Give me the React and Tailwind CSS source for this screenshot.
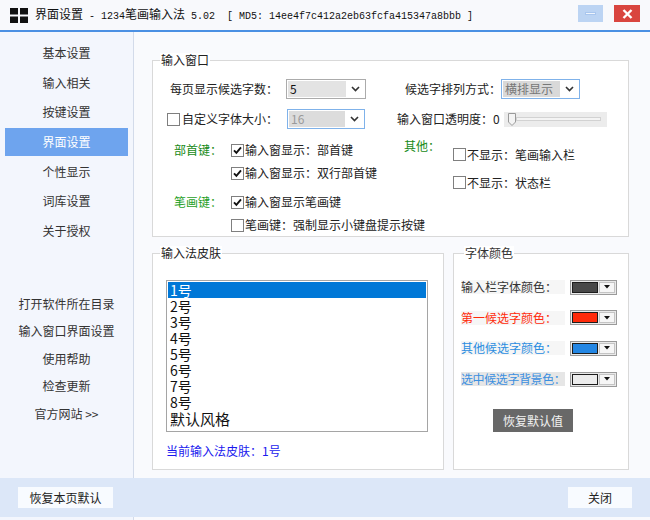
import React from "react";

const Check = ({ checked }) => (
  <span className="w-[13px] h-[13px] border border-[#7f7f7f] bg-white flex items-center justify-center shrink-0">
    {checked && (
      <svg width="9" height="9" viewBox="0 0 9 9">
        <path d="M1 4.3 L3.4 6.8 L8 1.4" stroke="#111" strokeWidth="1.9" fill="none" />
      </svg>
    )}
  </span>
);

const Chev = () => (
  <svg width="9" height="6" viewBox="0 0 9 6" className="shrink-0">
    <path d="M1 1 L4.5 4.6 L8 1" stroke="#333" strokeWidth="1.6" fill="none" />
  </svg>
);

const CheckItem = ({ checked, children, h }) => (
  <div className={`flex items-center ${h}`}>
    <Check checked={checked} />
    <span className="ml-[1px] text-[#222] whitespace-nowrap">{children}</span>
  </div>
);

const ColorBtn = ({ color }) => (
  <div className="w-[47px] h-[15px] border border-[#9a9a9a] bg-[#e9e9e9] flex items-center p-[1px] gap-[1px] shrink-0">
    <div className="w-[26px] h-[11px] border border-[#1c1c1c]" style={{ background: color }} />
    <div className="flex-1 h-[11px] bg-[#f6f6f6] border border-[#c4c4c4] flex items-center justify-center">
      <svg width="6" height="4" viewBox="0 0 6 4">
        <path d="M0 0 H6 L3 3.5 Z" fill="#111" />
      </svg>
    </div>
  </div>
);

export default function App() {
  const top = ["基本设置", "输入相关", "按键设置", "界面设置", "个性显示", "词库设置", "关于授权"];
  const bottom = ["打开软件所在目录", "输入窗口界面设置", "使用帮助", "检查更新", "官方网站 >>"];
  const skins = ["1号", "2号", "3号", "4号", "5号", "6号", "7号", "8号", "默认风格"];
  return (
    <div className="w-[650px] h-[520px] flex flex-col bg-[#f9fafd] font-['Noto_Sans_CJK_SC',sans-serif] text-[12px] leading-[14px] text-[#222] overflow-hidden">
      {/* Title bar */}
      <div className="h-[32px] shrink-0 border-b-2 border-[#4b90e3] bg-[#f8f9fc] flex items-start">
        <div className="flex items-center h-[30px] pl-[10px]">
          <svg width="18" height="15" viewBox="0 0 18 15" className="shrink-0">
            <rect x="0" y="0" width="8" height="6.5" fill="#111" />
            <rect x="10" y="0" width="8" height="6.5" fill="#111" />
            <rect x="0" y="8.5" width="8" height="6.5" fill="#111" />
            <rect x="10" y="8.5" width="8" height="6.5" fill="#111" />
          </svg>
          <span className="ml-[7px] whitespace-pre font-['Liberation_Mono','Noto_Sans_CJK_SC',monospace] text-[10px] text-[#111]">
            <span className="text-[12px] font-['Noto_Sans_CJK_SC',sans-serif]">界面设置</span>
            {" - 1234"}
            <span className="text-[12px] font-['Noto_Sans_CJK_SC',sans-serif]">笔画输入法</span>
            {" 5.02  [ MD5: 14ee4f7c412a2eb63fcfa415347a8bbb ]"}
          </span>
        </div>
        <div className="ml-auto flex items-start pt-[5px] pr-[10px] gap-[11px]">
          <div className="w-[25px] h-[17px] bg-[#bcd4f3] flex items-center justify-center">
            <div className="w-[11px] h-[3px] bg-[#eef4fc] border border-[#a9c6ee]" />
          </div>
          <div className="w-[26px] h-[17px] bg-[#d9453f] flex items-center justify-center">
            <svg width="11" height="10" viewBox="0 0 11 10">
              <path d="M1.5 1 L9.5 9 M9.5 1 L1.5 9" stroke="#fff" strokeWidth="2.4" />
            </svg>
          </div>
        </div>
      </div>

      {/* Body */}
      <div className="flex flex-1 min-h-0">
        {/* Sidebar */}
        <div className="w-[134px] shrink-0 border-r border-[#d3dbea] bg-[#f3f6fd] flex flex-col pt-[7px]">
          <div className="flex flex-col gap-[1.67px]">
            {top.map((t) => (
              <div
                key={t}
                className={`h-[28px] mx-[5px] flex items-center justify-center ${
                  t === "界面设置" ? "bg-[#6ea4ee] text-white" : "text-[#333]"
                }`}
              >
                {t}
              </div>
            ))}
          </div>
          <div className="flex flex-col mt-[45px]">
            {bottom.map((t) => (
              <div key={t} className="h-[27.5px] flex items-center justify-center text-[#333] whitespace-pre">
                {t}
              </div>
            ))}
          </div>
        </div>

        {/* Main */}
        <div className="flex-1 pl-[18px] pr-[23px] pt-[28px] flex flex-col">
          {/* Group 1 */}
          <div className="relative h-[177px] border border-[#d9d9d9] bg-white flex flex-col">
            <span className="absolute -top-[8px] left-[7px] px-[1px] bg-white text-[#222]">输入窗口</span>
            {/* Row 1 */}
            <div className="mt-[18px] h-[20px] flex items-center pl-[17px]">
              <span className="w-[116px] shrink-0 whitespace-nowrap">每页显示候选字数：</span>
              <div className="w-[80px] shrink-0 h-[20px] border border-[#ababab] bg-white flex items-center pl-[1px] pr-[5px]">
                <div className="w-[58px] h-[16px] bg-[#e3e3e3] flex items-center pl-[2px] text-[#111]">5</div>
                <span className="ml-auto"><Chev /></span>
              </div>
              <span className="ml-[39px] w-[96px] shrink-0 whitespace-nowrap">候选字排列方式：</span>
              <div className="w-[79px] shrink-0 h-[20px] border border-[#7fb2ea] bg-white flex items-center pl-[1px] pr-[5px]">
                <div className="w-[57px] h-[16px] bg-[#d9d9d9] flex items-center pl-[2px] text-[#777]">横排显示</div>
                <span className="ml-auto"><Chev /></span>
              </div>
            </div>
            {/* Row 2 */}
            <div className="mt-[10px] h-[20px] flex items-center pl-[14px]">
              <div className="w-[120px] shrink-0 flex items-center">
                <Check />
                <span className="ml-[2px] whitespace-nowrap">自定义字体大小：</span>
              </div>
              <div className="w-[78px] shrink-0 h-[20px] border border-[#7fb2ea] bg-white flex items-center pl-[1px] pr-[5px]">
                <div className="w-[56px] h-[16px] bg-[#dcdcdc] flex items-center pl-[2px] text-[#9a9a9a]">16</div>
                <span className="ml-auto"><Chev /></span>
              </div>
              <span className="ml-[32px] w-[107px] shrink-0 whitespace-nowrap">输入窗口透明度：0</span>
              <div className="w-[103px] shrink-0 h-[15px] bg-[#ececec] flex items-center pl-[4px] pr-[6px]">
                <svg width="8" height="13" viewBox="0 0 8 13" className="shrink-0">
                  <path d="M0.5 0.5 H7.5 V9 L4 12.5 L0.5 9 Z" fill="#f4f4f4" stroke="#9a9a9a" />
                </svg>
                <div className="flex-1 h-[4px] border border-[#d2d2d2] bg-[#f4f4f4]" />
              </div>
            </div>
            {/* Section */}
            <div className="mt-[9.5px] flex">
              <div className="w-[230px] shrink-0 ml-[21px] flex flex-col">
                <div className="flex">
                  <span className="w-[57px] shrink-0 whitespace-nowrap h-[23px] flex items-center text-[#178a17]">部首键：</span>
                  <div className="flex flex-col">
                    <CheckItem checked h="h-[23px]">输入窗显示：部首键</CheckItem>
                    <CheckItem checked h="h-[23px]">输入窗显示：双行部首键</CheckItem>
                  </div>
                </div>
                <div className="flex mt-[6px]">
                  <span className="w-[57px] shrink-0 whitespace-nowrap h-[23px] flex items-center text-[#1fa01f]">笔画键：</span>
                  <div className="flex flex-col">
                    <CheckItem checked h="h-[23px]">输入窗显示笔画键</CheckItem>
                    <CheckItem h="h-[23px]">笔画键：强制显示小键盘提示按键</CheckItem>
                  </div>
                </div>
              </div>
              <div className="flex">
                <span className="w-[49px] shrink-0 whitespace-nowrap h-[14px] text-[#178a17]">其他：</span>
                <div className="flex flex-col mt-[2px]">
                  <CheckItem h="h-[28px]">不显示：笔画输入栏</CheckItem>
                  <CheckItem h="h-[28px]">不显示：状态栏</CheckItem>
                </div>
              </div>
            </div>
          </div>

          {/* Row of groups */}
          <div className="mt-[16px] flex gap-[9px]">
            {/* Group 2 */}
            <div className="relative w-[292px] h-[217px] border border-[#d9d9d9] bg-white flex flex-col">
              <span className="absolute -top-[8px] left-[7px] px-[1px] bg-white">输入法皮肤</span>
              <div className="mt-[26px] ml-[13px] w-[262px] h-[152px] border border-[#a5a5a5] bg-white p-[1px] flex flex-col">
                {skins.map((s, i) => (
                  <div
                    key={s}
                    className={`h-[16px] flex items-center pl-[2px] ${
                      i === 0 ? "bg-[#0078d7] text-white" : "text-[#111]"
                    }`}
                  >
                    <span className={`leading-[15px] ${i === 8 ? "text-[15px]" : "text-[14px]"}`}>{s}</span>
                  </div>
                ))}
              </div>
              <div className="mt-[12px] ml-[13px] text-[#1a1aee]">当前输入法皮肤：1号</div>
            </div>
            {/* Group 3 */}
            <div className="relative w-[176px] h-[217px] border border-[#d9d9d9] bg-white flex flex-col">
              <span className="absolute -top-[8px] left-[10px] px-[1px] bg-white text-[#333]">字体颜色</span>
              <div className="mt-[25px] pl-[7px] flex flex-col gap-[14.7px]">
                <div className="h-[16px] flex items-center">
                  <span className="w-[109px] shrink-0 flex">
                    <span className="bg-[#f6f6f6] pr-[8px] text-[#333] whitespace-nowrap">输入栏字体颜色：</span>
                  </span>
                  <ColorBtn color="#484848" />
                </div>
                <div className="h-[16px] flex items-center">
                  <span className="w-[109px] shrink-0 flex">
                    <span className="bg-[#f6f6f6] pr-[8px] text-[#ff2a0a] whitespace-nowrap">第一候选字颜色：</span>
                  </span>
                  <ColorBtn color="#ff2a0a" />
                </div>
                <div className="h-[16px] flex items-center">
                  <span className="w-[109px] shrink-0 flex">
                    <span className="bg-[#f6f6f6] pr-[8px] text-[#2a8de0] whitespace-nowrap">其他候选字颜色：</span>
                  </span>
                  <ColorBtn color="#2386e3" />
                </div>
                <div className="h-[16px] flex items-center">
                  <span className="w-[109px] shrink-0 flex">
                    <span className="bg-[#e6e6e6] text-[#3b8fe0] whitespace-nowrap tracking-[-0.4px]">选中候选字背景色：</span>
                  </span>
                  <ColorBtn color="#ececec" />
                </div>
              </div>
              <div className="mt-[22px] ml-[39px] w-[80px] h-[23px] bg-[#686868] text-[#f2f2f2] flex items-center justify-center">
                恢复默认值
              </div>
            </div>
          </div>
        </div>
      </div>

      {/* Footer */}
      <div className="h-[39px] shrink-0 bg-[#dce7f8] flex items-center justify-between pl-[18px] pr-[18px]">
        <div className="w-[95px] h-[21px] bg-[#f8fbff] flex items-center justify-center text-[#222]">恢复本页默认</div>
        <div className="w-[64px] h-[21px] bg-[#f8fbff] flex items-center justify-center text-[#222]">关闭</div>
      </div>
      <div className="h-[3px] shrink-0 flex">
        <div className="w-[134px] border-r border-[#d3dbea] bg-[#f3f6fd]" />
        <div className="flex-1 bg-[#f9fafd]" />
      </div>
    </div>
  );
}
